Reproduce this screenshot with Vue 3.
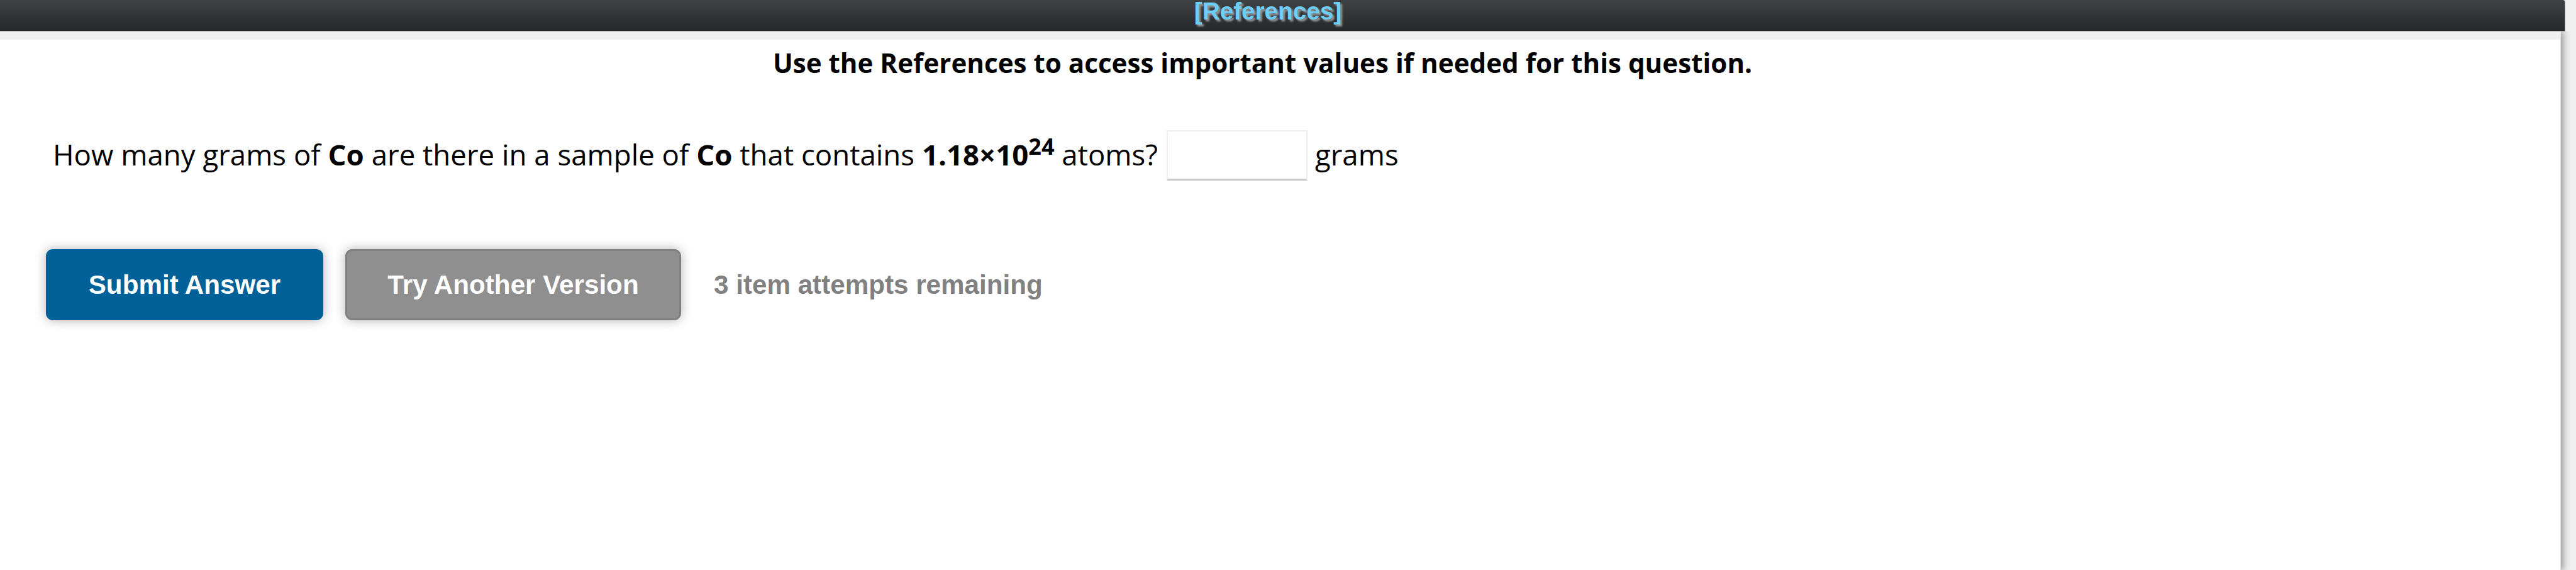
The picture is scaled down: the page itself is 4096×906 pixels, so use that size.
<template>
    <div class="page">
        <header class="toolbar">
            <a class="references">[References]</a>
        </header>
        <main class="panel">
            <p class="notice"><b>Use the References to access important values if needed for this question.</b></p>
            <div class="question">
                <span>How many grams of <b>Co</b> are there in a sample of <b>Co</b> that contains <b>1.18×10<sup>24</sup></b> atoms?</span>
                <input v-model="answer" class="answer" type="text"/>
                <span>grams</span>
            </div>
            <div class="actions">
                <button class="button submit">Submit Answer</button>
                <button class="button another">Try Another Version</button>
                <span class="attempts">{{ attempts }} item attempts remaining</span>
            </div>
        </main>
    </div>
</template>

<script setup>
    import { ref } from 'vue';
    const answer = ref('');
    const attempts = ref(3);
</script>

<style>
    body {
        margin: 0;
        background: #efefef;
    }
</style>

<style scoped>
    .page {
        height: 906px;
        overflow: hidden;
        font-family: "Open Sans", sans-serif;
        color: #000;
    }

    .toolbar {
        box-sizing: border-box;
        width: 4079px;
        height: 50px;
        padding-right: 46px;
        border-right: 1px solid #999;
        border-bottom: 1px solid #999;
        border-top-right-radius: 4px;
        background: linear-gradient(#404143, #262728);
        text-align: center;
    }

    .references {
        display: block;
        font: bold 38.7px/36px "Liberation Sans", sans-serif;
        color: #6dcff6;
        text-shadow: 3px 3px 3px #999;
    }

    .panel {
        box-sizing: border-box;
        width: 4072px;
        height: 856px;
        border-top: 13px solid #efefef;
        border-right: 1px solid #ddd;
        background: #fff;
        box-shadow: 4px 0 10px #999;
        clip-path: inset(0 -24px 0 0);
    }

    .notice {
        margin: 0 56px 0 0;
        padding-top: 1px;
        font-size: 42.15px;
        line-height: 72px;
        text-align: center;
    }

    .question {
        display: flex;
        align-items: flex-start;
        margin: 71px 0 0 84px;
        font-size: 45.6px;
        line-height: 77px;
    }

    sup {
        font-size: 79%;
        line-height: 0;
        vertical-align: 17.5px;
    }

    .answer {
        box-sizing: border-box;
        width: 224px;
        height: 80px;
        margin: 0 12px 0 14px;
        border: 2px solid #eee;
        border-bottom: 3px solid #c8c8c8;
    }

    .actions {
        display: flex;
        align-items: center;
        gap: 35px;
        margin: 109px 0 0 73px;
        font: bold 42.2px "Liberation Sans", sans-serif;
    }

    .button {
        box-sizing: border-box;
        height: 113px;
        padding: 0;
        border: 3px solid #006198;
        border-radius: 11px;
        background: #006198;
        box-shadow: 0 0 18px rgba(0, 0, 0, .3);
        font: inherit;
        color: #fff;
    }

    .submit {
        width: 441px;
    }

    .another {
        width: 534px;
        border-color: #808080;
        background: #8f8f8f;
    }

    .attempts {
        margin-left: 17px;
        color: #808080;
    }
</style>
